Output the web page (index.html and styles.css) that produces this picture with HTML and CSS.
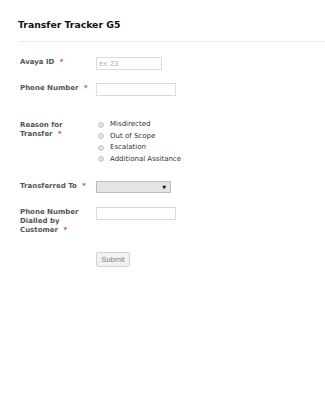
FILE: index.html
```html
<!DOCTYPE html>
<html lang="en">
<head>
<meta charset="UTF-8" />
<title>Transfer Tracker G5</title>
<link rel="stylesheet" href="styles.css">
</head>
<body>

<div class="form-wrap">
  <h1 class="form-title">Transfer Tracker G5</h1>

  <div class="form-line row-avaya">
    <label class="form-label" for="avayaId">Avaya ID <span class="req">*</span></label>
    <div class="form-input">
      <input type="text" id="avayaId" class="text-in short" placeholder="ex: 23" />
    </div>
  </div>

  <div class="form-line row-phone">
    <label class="form-label" for="phone">Phone Number <span class="req">*</span></label>
    <div class="form-input">
      <input type="text" id="phone" class="text-in" />
    </div>
  </div>

  <div class="form-line row-reason">
    <label class="form-label">Reason for<br />Transfer <span class="req">*</span></label>
    <div class="form-input radios">
      <label class="radio-row"><span class="radio"></span>Misdirected</label>
      <label class="radio-row"><span class="radio"></span>Out of Scope</label>
      <label class="radio-row"><span class="radio"></span>Escalation</label>
      <label class="radio-row"><span class="radio"></span>Additional Assitance</label>
    </div>
  </div>

  <div class="form-line row-transfer">
    <label class="form-label">Transferred To <span class="req">*</span></label>
    <div class="form-input">
      <div class="fake-select"><span class="arrow">&#9660;</span></div>
    </div>
  </div>

  <div class="form-line row-dialled">
    <label class="form-label" for="dialled">Phone Number<br />Dialled by<br />Customer <span class="req">*</span></label>
    <div class="form-input">
      <input type="text" id="dialled" class="text-in" />
    </div>
  </div>

  <div class="form-line row-submit">
    <div class="form-label"></div>
    <div class="form-input">
      <button class="submit-btn">Submit</button>
    </div>
  </div>
</div>

</body>
</html>
```

FILE: styles.css
```css
/* --- Basic reset --- */
* {
  box-sizing: border-box;
}
body {
  margin: 0;
  background: #fff;
  font-family: "DejaVu Sans", Verdana, sans-serif;
  color: #555;
}

/* --- Form wrapper --- */
.form-wrap {
  padding: 19px 0 0 18px;
}
.form-title {
  margin: 0;
  font-size: 9.3px;
  line-height: 12px;
  font-weight: bold;
  color: #111;
  padding-bottom: 10px;
  border-bottom: 1px solid #ececec;
}

/* --- Rows --- */
.form-line {
  display: flex;
  align-items: flex-start;
  padding-left: 2px;
}
.row-avaya { margin-top: 15px; }
.row-phone { margin-top: 13px; }
.row-reason { margin-top: 24px; }
.row-transfer { margin-top: 17px; }
.row-dialled { margin-top: 14px; }
.row-submit { margin-top: 17px; }

.form-label {
  width: 76px;
  font-size: 7px;
  font-weight: bold;
  line-height: 9px;
  color: #555;
  padding-top: 1px;
}
.req {
  color: #f23a3c;
  margin-left: 3px;
}
.form-input {
  display: flex;
  flex-direction: column;
}

/* --- Text inputs --- */
.text-in {
  width: 80px;
  height: 13px;
  border: 1px solid #dcdcdc;
  padding: 0 2px;
  font-family: "Liberation Sans", Arial, sans-serif;
  font-size: 7px;
  color: #333;
  outline: none;
}
.text-in.short {
  width: 66px;
}
.text-in::placeholder {
  color: #aaa;
}

/* --- Radios --- */
.radios {
  gap: 2px;
}
.radio-row {
  display: flex;
  align-items: center;
  font-size: 7px;
  line-height: 9.5px;
  color: #333;
}
.radio {
  width: 6px;
  height: 6px;
  border-radius: 50%;
  border: 1px solid #c8c8c8;
  background: #e2e2e2;
  margin: 0 6px 0 2px;
}

/* --- Select --- */
.fake-select {
  width: 75px;
  height: 12px;
  border: 1px solid #bdbdbd;
  background: #e4e4e4;
  position: relative;
}
.fake-select .arrow {
  position: absolute;
  right: 4px;
  top: 2px;
  font-size: 5px;
  line-height: 6px;
  color: #111;
}

/* --- Submit --- */
.submit-btn {
  width: 34px;
  height: 15px;
  padding: 0;
  border: 1px solid #d4d4d4;
  border-radius: 2px;
  background: #f2f2f2;
  font-family: "Liberation Sans", Arial, sans-serif;
  font-size: 7.5px;
  color: #808080;
}
```
